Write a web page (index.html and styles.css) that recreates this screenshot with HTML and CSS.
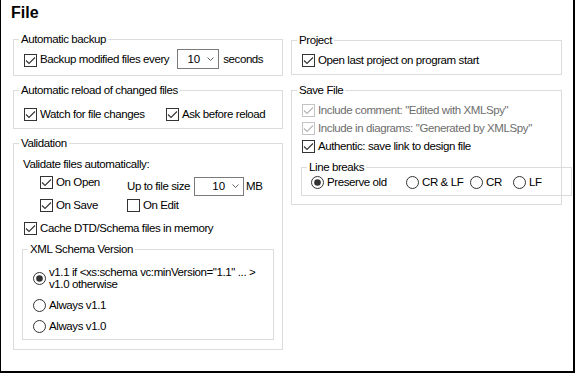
FILE: index.html
```html
<!DOCTYPE html>
<html>
<head>
<meta charset="utf-8">
<link rel="stylesheet" href="styles.css">
</head>
<body>
<div class="frame">
  <h1 class="title">File</h1>
  <div class="columns">
    <div class="col left">
      <fieldset class="group g-backup">
        <legend>Automatic backup</legend>
        <div class="body">
          <div class="row tall">
            <svg class="cb" viewBox="0 0 13 13"><rect x="0.5" y="0.5" width="12" height="12" fill="#fff" stroke="#333"/><path d="M2 6.5 L5 9.5 L11 3.5" fill="none" stroke="#333" stroke-width="1.1"/></svg>
            <span class="lbl">Backup modified files every</span>
            <span class="combo c1"><span class="val">10</span><svg class="chev" viewBox="0 0 7 4"><path d="M0.5 0.5 L3.5 3.5 L6.5 0.5" fill="none" stroke="#606060"/></svg></span>
            <span class="lbl after">seconds</span>
          </div>
        </div>
      </fieldset>

      <fieldset class="group g-reload">
        <legend>Automatic reload of changed files</legend>
        <div class="body two">
          <div class="row">
            <svg class="cb" viewBox="0 0 13 13"><rect x="0.5" y="0.5" width="12" height="12" fill="#fff" stroke="#333"/><path d="M2 6.5 L5 9.5 L11 3.5" fill="none" stroke="#333" stroke-width="1.1"/></svg>
            <span class="lbl">Watch for file changes</span>
          </div>
          <div class="row">
            <svg class="cb" viewBox="0 0 13 13"><rect x="0.5" y="0.5" width="12" height="12" fill="#fff" stroke="#333"/><path d="M2 6.5 L5 9.5 L11 3.5" fill="none" stroke="#333" stroke-width="1.1"/></svg>
            <span class="lbl">Ask before reload</span>
          </div>
        </div>
      </fieldset>

      <fieldset class="group g-valid">
        <legend>Validation</legend>
        <div class="body">
          <div class="intro">Validate files automatically:</div>
          <div class="vgrid">
            <div class="row">
              <svg class="cb" viewBox="0 0 13 13"><rect x="0.5" y="0.5" width="12" height="12" fill="#fff" stroke="#333"/><path d="M2 6.5 L5 9.5 L11 3.5" fill="none" stroke="#333" stroke-width="1.1"/></svg>
              <span class="lbl">On Open</span>
            </div>
            <div class="row tall">
              <span class="lbl0">Up to file size</span>
              <span class="combo c2"><span class="val">10</span><svg class="chev" viewBox="0 0 7 4"><path d="M0.5 0.5 L3.5 3.5 L6.5 0.5" fill="none" stroke="#606060"/></svg></span>
              <span class="lbl mb">MB</span>
            </div>
            <div class="row">
              <svg class="cb" viewBox="0 0 13 13"><rect x="0.5" y="0.5" width="12" height="12" fill="#fff" stroke="#333"/><path d="M2 6.5 L5 9.5 L11 3.5" fill="none" stroke="#333" stroke-width="1.1"/></svg>
              <span class="lbl">On Save</span>
            </div>
            <div class="row">
              <svg class="cb" viewBox="0 0 13 13"><rect x="0.5" y="0.5" width="12" height="12" fill="#fff" stroke="#333"/></svg>
              <span class="lbl">On Edit</span>
            </div>
          </div>
          <div class="row cache">
            <svg class="cb" viewBox="0 0 13 13"><rect x="0.5" y="0.5" width="12" height="12" fill="#fff" stroke="#333"/><path d="M2 6.5 L5 9.5 L11 3.5" fill="none" stroke="#333" stroke-width="1.1"/></svg>
            <span class="lbl">Cache DTD/Schema files in memory</span>
          </div>

          <fieldset class="group g-xml">
            <legend>XML Schema Version</legend>
            <div class="body">
              <div class="row multi">
                <svg class="rb" viewBox="0 0 13 13"><circle cx="6.5" cy="6.5" r="6" fill="#fff" stroke="#333"/><circle cx="6.5" cy="6.5" r="3.3" fill="#333"/></svg>
                <span class="lbl two-line">v1.1 if &lt;xs:schema vc:minVersion="1.1" ... &gt;<br>v1.0 otherwise</span>
              </div>
              <div class="row r2">
                <svg class="rb" viewBox="0 0 13 13"><circle cx="6.5" cy="6.5" r="6" fill="#fff" stroke="#333"/></svg>
                <span class="lbl">Always v1.1</span>
              </div>
              <div class="row r3">
                <svg class="rb" viewBox="0 0 13 13"><circle cx="6.5" cy="6.5" r="6" fill="#fff" stroke="#333"/></svg>
                <span class="lbl">Always v1.0</span>
              </div>
            </div>
          </fieldset>
        </div>
      </fieldset>
    </div>

    <div class="col right">
      <fieldset class="group g-project">
        <legend>Project</legend>
        <div class="body">
          <div class="row">
            <svg class="cb" viewBox="0 0 13 13"><rect x="0.5" y="0.5" width="12" height="12" fill="#fff" stroke="#333"/><path d="M2 6.5 L5 9.5 L11 3.5" fill="none" stroke="#333" stroke-width="1.1"/></svg>
            <span class="lbl">Open last project on program start</span>
          </div>
        </div>
      </fieldset>

      <fieldset class="group g-save">
        <legend>Save File</legend>
        <div class="body">
          <div class="row disabled">
            <svg class="cb" viewBox="0 0 13 13"><rect x="0.5" y="0.5" width="12" height="12" fill="#fff" stroke="#c4c4c4"/><path d="M2 6.5 L5 9.5 L11 3.5" fill="none" stroke="#b4b4b4" stroke-width="1.1"/></svg>
            <span class="lbl">Include comment: "Edited with XMLSpy"</span>
          </div>
          <div class="row disabled">
            <svg class="cb" viewBox="0 0 13 13"><rect x="0.5" y="0.5" width="12" height="12" fill="#fff" stroke="#c4c4c4"/><path d="M2 6.5 L5 9.5 L11 3.5" fill="none" stroke="#b4b4b4" stroke-width="1.1"/></svg>
            <span class="lbl">Include in diagrams: "Generated by XMLSpy"</span>
          </div>
          <div class="row">
            <svg class="cb" viewBox="0 0 13 13"><rect x="0.5" y="0.5" width="12" height="12" fill="#fff" stroke="#333"/><path d="M2 6.5 L5 9.5 L11 3.5" fill="none" stroke="#333" stroke-width="1.1"/></svg>
            <span class="lbl">Authentic: save link to design file</span>
          </div>

          <fieldset class="group g-lines">
            <legend>Line breaks</legend>
            <div class="body">
              <div class="row">
                <svg class="rb" viewBox="0 0 13 13"><circle cx="6.5" cy="6.5" r="6" fill="#fff" stroke="#333"/><circle cx="6.5" cy="6.5" r="3.3" fill="#333"/></svg>
                <span class="lbl">Preserve old</span>
              </div>
              <div class="row">
                <svg class="rb" viewBox="0 0 13 13"><circle cx="6.5" cy="6.5" r="6" fill="#fff" stroke="#333"/></svg>
                <span class="lbl">CR &amp; LF</span>
              </div>
              <div class="row">
                <svg class="rb" viewBox="0 0 13 13"><circle cx="6.5" cy="6.5" r="6" fill="#fff" stroke="#333"/></svg>
                <span class="lbl">CR</span>
              </div>
              <div class="row">
                <svg class="rb" viewBox="0 0 13 13"><circle cx="6.5" cy="6.5" r="6" fill="#fff" stroke="#333"/></svg>
                <span class="lbl">LF</span>
              </div>
            </div>
          </fieldset>
        </div>
      </fieldset>
    </div>
  </div>
</div>
</body>
</html>
```

FILE: styles.css
```css
* { box-sizing: border-box; }

html, body {
  margin: 0;
  padding: 0;
  background: #fff;
}

body {
  font-family: "Liberation Sans", Arial, sans-serif;
  font-size: 11.5px;
  letter-spacing: -0.4px;
  color: #000;
}

.frame {
  width: 575px;
  height: 373px;
  border-left: 1px solid #000;
  border-right: 2px solid #000;
  border-bottom: 2px solid #000;
  padding-left: 12px;
  overflow: hidden;
}

.title {
  margin: 3px 0 0 -2px;
  font-size: 16px;
  line-height: 20px;
  font-weight: bold;
  letter-spacing: 0;
}

.columns {
  display: flex;
  gap: 8px;
  margin-top: 9px;
  align-items: flex-start;
}

.col {
  display: flex;
  flex-direction: column;
}

.left { width: 270px; }
.right { width: 271px; margin-top: 1px; }

.group {
  margin: 0;
  padding: 0;
  border: 1px solid #dcdcdc;
  min-width: 0;
}

legend {
  margin-left: 5px;
  padding: 0 2px;
  line-height: 15px;
}

.row {
  display: flex;
  align-items: center;
  height: 13px;
  line-height: 13px;
  white-space: nowrap;
}

.row.tall { height: 20px; }

.cb, .rb {
  width: 13px;
  height: 13px;
  flex: none;
  display: block;
}

.lbl { margin-left: 3px; }

.combo {
  display: flex;
  align-items: center;
  justify-content: flex-end;
  height: 20px;
  border: 1px solid #7a7a7a;
  background: #fff;
  padding-right: 4px;
  flex: none;
}

.combo .val { letter-spacing: 0; }

.chev {
  width: 7px;
  height: 4px;
  margin-left: 7px;
  display: block;
}

.c1 { width: 42px; margin-left: 8px; }
.c2 { width: 50px; margin-left: 4px; height: 19px; }
.after { margin-left: 4px; }
.mb { margin-left: 2px; }

/* Automatic backup */
.g-backup > .body { padding: 2px 0 6px 10px; }
.g-backup .cb { margin-top: 2px; }

/* Automatic reload */
.g-reload { margin-top: 7px; }
.g-reload > .body {
  padding: 10px 0 7px 10px;
  display: grid;
  grid-template-columns: 142px auto;
}

/* Validation */
.g-valid { margin-top: 7px; }
.g-valid > .body { padding: 7px 8px 9px 8px; }

.intro {
  line-height: 13px;
  margin-left: 1px;
}

.vgrid {
  display: grid;
  grid-template-columns: 87px auto;
  grid-template-rows: 20px 13px;
  row-gap: 3px;
  margin: 5px 0 0 18px;
}

.cache { margin: 10px 0 0 2px; }

.g-xml { margin-top: 7px; }
.g-xml > .body { padding: 9px 0 6px 10px; }

.row.multi { height: 24px; }
.two-line { line-height: 12px; }
.r2 { margin-top: 9px; }
.r3 { margin-top: 8px; }

/* Project */
.g-project > .body { padding: 6px 0 7px 10px; }

/* Save file */
.g-save { margin-top: 8px; }
.g-save > .body {
  padding: 6px 0 8px 10px;
  display: flex;
  flex-direction: column;
  gap: 5px;
}

.disabled { color: #6d6d6d; }

.g-lines {
  width: 271px;
  margin: 2px 0 0 -1px;
  flex: none;
}

.g-lines > .body {
  padding: 1px 0 6px 9px;
  display: grid;
  grid-template-columns: 95px 64px 43px auto;
}
```
